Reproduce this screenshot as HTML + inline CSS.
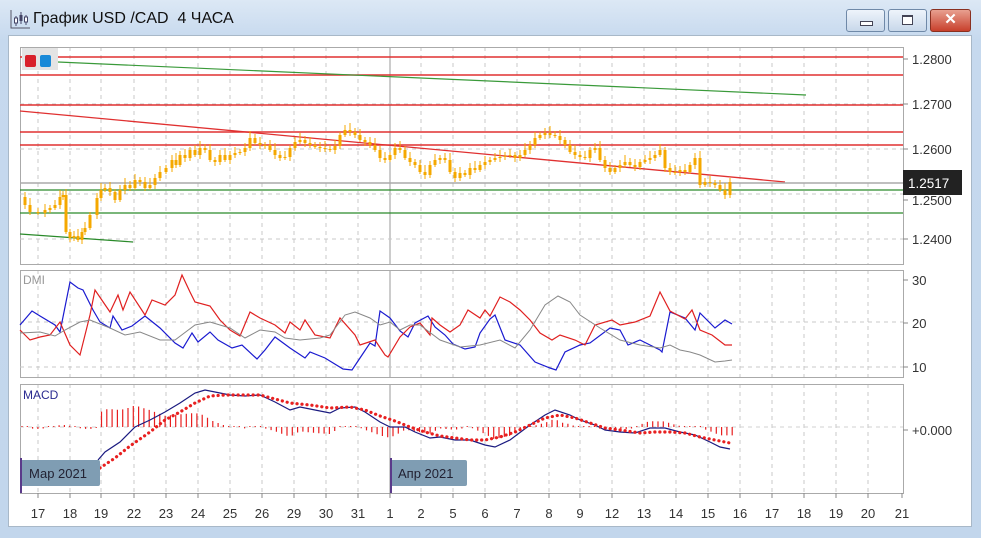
<!DOCTYPE html>
<html><head><meta charset="utf-8"><style>
html,body{margin:0;padding:0;width:981px;height:538px;overflow:hidden;background:#c9dbef;font-family:"Liberation Sans","Noto Sans CJK JP",sans-serif}
#frame{position:absolute;left:0;top:0;width:981px;height:538px;background:linear-gradient(#dce8f5,#c6d9ee 40px,#c2d6ec)}
#title{position:absolute;left:33px;top:10px;font-size:16px;color:#111}
.btn{position:absolute;top:9px;height:21px;border:1px solid #6f89a8;border-radius:3px;background:linear-gradient(#eef4fb,#c8d8ea)}
#inner{position:absolute;left:8px;top:35px;width:964px;height:492px;background:#fff;border:1px solid #a8b8c8;box-sizing:border-box}
svg{position:absolute;left:0;top:0}
</style></head><body>
<div id="frame"></div>
<svg width="30" height="30" style="left:8px;top:6px"><path d="M3 4V22H22" stroke="#556" fill="none"/><path d="M8 10V20M13 6V18M18 9V19" stroke="#446" stroke-width="1"/><rect x="6.5" y="12" width="3" height="5" fill="#fff" stroke="#446"/><rect x="11.5" y="9" width="3" height="6" fill="#446"/><rect x="16.5" y="11" width="3" height="5" fill="#fff" stroke="#446"/></svg>
<div id="title">График USD /CAD&nbsp; 4 ЧАСА</div>
<div class="btn" style="left:846px;width:37px"><div style="position:absolute;left:13px;top:11px;width:11px;height:3px;background:#fff;border:1px solid #445"></div></div>
<div class="btn" style="left:888px;width:37px"><div style="position:absolute;left:13px;top:5px;width:9px;height:7px;border:1px solid #445;border-top-width:2px;background:#fff"></div></div>
<div class="btn" style="left:930px;width:39px;background:linear-gradient(#e8a090,#c8402c);border-color:#8a3020;color:#fff;font-weight:bold;font-size:15px;text-align:center;line-height:20px">✕</div>
<div id="inner"></div>
<svg id="c" width="981" height="538" font-family="Liberation Sans, sans-serif"></svg>
<script>
var S=document.getElementById('c'),h='';
function L(x1,y1,x2,y2,c,w,d){h+='<line x1="'+x1+'" y1="'+y1+'" x2="'+x2+'" y2="'+y2+'" stroke="'+c+'" stroke-width="'+(w||1)+'"'+(d?' stroke-dasharray="'+d+'"':'')+'/>';}
function P(a,c,w,extra){h+='<polyline fill="none" stroke="'+c+'" stroke-width="'+(w||1)+'" '+(extra||'')+' points="'+a.join(' ')+'"/>';}
function T(x,y,t,c,s,extra){h+='<text x="'+x+'" y="'+y+'" fill="'+(c||'#333')+'" font-size="'+(s||13)+'" '+(extra||'')+'>'+t+'</text>';}
var xs=[38,70,101,134,166,198,230,262,294,326,358,421,453,485,517,549,580,612,644,676,708,740,772,804,836,868];
var panes=[[47,264],[270,377],[384,493]];
panes.forEach(function(p){xs.forEach(function(x){L(x,p[0],x,p[1],'#c8c8c8',1,'4,4');});L(390,p[0],390,p[1],'#999',1);h+='<rect x="20.5" y="'+p[0]+'.5" width="883" height="'+(p[1]-p[0])+'" fill="none" stroke="#aaa"/>';});
[104,149,194,239].forEach(function(y){L(20,y,903,y,'#c8c8c8',1,'4,4');});
[322,367].forEach(function(y){L(20,y,903,y,'#c8c8c8',1,'4,4');});
L(20,427,903,427,'#d0d0d0',1,'4,4');
[57,75,105,132,145].forEach(function(y){L(20,y,903,y,'#e03030',1.5);});
L(20,111,785,182,'#e03030',1.3);
L(58,62,806,95,'#3a9a3a',1.2);
L(20,234,133,242,'#2a8a2a',1.2);
L(20,183,903,183,'#aaa',1.5);
L(20,190,903,190,'#2a8a2a',1.3);L(20,213,903,213,'#2a8a2a',1.3);
var pr=[20,197,25,205,30,212,38,213,45,210,50,208,55,205,60,197,63,195,66,232,70,238,74,236,78,240,82,232,85,228,90,215,97,198,101,190,105,188,110,192,115,200,120,190,125,185,130,188,135,180,140,182,145,188,150,185,155,178,160,172,166,168,172,160,176,165,180,155,185,158,190,150,195,155,200,148,205,150,210,160,215,162,220,155,225,160,230,155,235,153,240,152,245,148,250,138,255,143,260,145,265,145,270,150,275,155,280,158,285,157,290,148,295,142,300,140,305,143,310,145,315,147,320,148,325,149,330,150,335,146,340,135,345,130,350,132,355,135,360,140,365,142,370,145,375,150,380,158,385,160,390,155,395,148,400,150,405,158,410,162,415,165,420,172,425,175,430,165,435,160,440,158,445,160,450,172,455,178,460,173,465,175,470,168,475,170,480,165,485,162,490,160,495,158,500,157,505,156,510,155,515,158,520,155,525,150,530,145,535,138,540,135,545,133,550,135,555,136,560,140,565,145,570,152,575,155,580,157,585,158,590,150,595,148,600,160,605,168,610,172,615,168,620,165,625,162,630,165,635,167,640,162,645,160,650,158,655,155,660,150,665,168,670,172,675,172,680,170,685,172,690,165,695,158,700,185,705,182,710,183,715,185,720,190,725,195,730,182];
var cp='',wp='';
for(var i=2;i<pr.length;i+=2){var x=pr[i],a=pr[i-1],b=pr[i+1],mn=Math.min(a,b),mx=Math.max(a,b);if(mx-mn<1)mx=mn+1;wp+='M'+x+' '+(mn-3-(i%5))+'V'+(mx+2+(i%3));cp+='M'+x+' '+mn+'V'+mx;}
h+='<path d="'+wp+'" stroke="#f5a800" stroke-width="1"/><path d="'+cp+'" stroke="#f5a800" stroke-width="3"/>';
P([20,325,32,311,40,316,55,325,60,332,70,282,78,288,83,290,93,310,100,322,110,328,113,316,122,330,132,326,145,316,150,320,160,328,175,343,183,348,192,333,198,342,210,332,218,340,232,348,242,345,257,359,265,350,275,337,290,348,305,358,310,352,325,358,343,369,352,370,360,358,370,343,375,346,380,311,390,318,400,331,408,337,415,323,428,316,435,327,445,335,453,344,465,349,475,347,480,333,490,319,495,315,505,340,520,345,535,362,550,368,556,370,565,352,580,345,590,343,610,328,620,330,628,345,640,340,660,350,662,352,670,312,685,318,695,330,700,313,715,328,725,320,732,324],'#1a1ad0',1.2);
P([20,330,30,340,40,337,50,335,60,322,70,345,80,355,90,315,95,290,110,312,118,295,123,310,130,292,145,315,152,300,165,305,175,295,182,275,190,292,195,302,210,306,220,320,230,330,240,336,250,312,260,318,275,325,285,333,290,322,300,330,305,320,315,335,330,338,340,318,355,335,360,345,375,340,385,355,388,357,400,337,410,327,420,323,430,335,432,318,440,325,450,332,460,325,468,310,480,318,485,310,490,316,500,297,510,302,520,310,530,320,540,333,552,340,560,335,575,340,585,345,595,325,612,320,620,325,635,322,650,316,660,292,670,311,685,319,692,310,700,330,712,335,725,345,732,345],'#e02020',1.2);
P([20,333,40,332,55,336,65,330,80,322,90,320,110,328,125,335,140,332,160,340,175,340,195,325,210,322,230,328,245,338,260,330,275,332,285,338,300,340,320,338,330,335,345,315,355,312,370,318,380,325,390,322,400,330,410,325,420,325,440,340,460,347,480,345,500,340,515,348,530,330,545,305,558,296,570,302,580,315,600,328,620,340,640,345,660,348,670,345,680,350,690,352,700,355,715,362,725,361,732,360],'#888',1);
T(23,284,'DMI','#999',12);
var bl=[98,460,105,452,120,442,135,427,150,420,165,412,180,403,195,393,205,390,215,392,230,395,245,396,260,395,275,402,290,410,300,407,315,410,330,413,340,408,355,407,365,412,380,422,390,427,405,427,415,432,430,438,440,437,455,440,470,440,485,445,495,447,510,440,530,425,545,415,555,410,570,415,580,420,595,425,605,430,620,432,635,433,650,428,665,428,680,432,695,435,710,442,720,447,730,449];
var sg=[100,468,115,458,130,446,150,432,165,420,180,412,195,403,210,396,225,395,245,395,260,395,275,399,290,403,310,405,330,408,350,407,365,410,380,416,395,421,410,427,425,432,440,436,455,438,470,440,485,440,500,437,515,432,530,425,545,418,560,415,575,418,590,423,605,428,620,430,640,433,655,432,670,432,685,433,700,437,715,440,730,443];
function iy(a,x){for(var i=2;i<a.length;i+=2){if(a[i]>=x){var t=(x-a[i-2])/(a[i]-a[i-2]);return a[i-1]+t*(a[i+1]-a[i-1]);}}return a[a.length-1];}
var hp='';
for(var x=22;x<=735;x+=5.3){var v;if(x<100){v=(Math.sin(x/8)*2);}else{v=(iy(sg,x)-iy(bl,x))*1.4;}var y2=427-v;hp+='M'+x.toFixed(1)+' 427V'+(Math.abs(v)<1?426:y2).toFixed(1);}
h+='<path d="'+hp+'" stroke="#e82020" stroke-width="1.2"/>';
P(bl,'#1a1a80',1.2);
P(sg,'#e82020',3.2,'stroke-dasharray="0.1,4.9" stroke-linecap="round"');
T(23,399,'MACD','#2a2a90',12);
h+='<rect x="20" y="460" width="80" height="26" rx="2" fill="#7f9db3"/><rect x="390" y="460" width="77" height="26" rx="2" fill="#7f9db3"/>';
L(21,458,21,493,'#5a3a8a',2);L(391,458,391,493,'#5a3a8a',2);
T(29,478,'Мар 2021','#223',13);T(398,478,'Апр 2021','#223',13);
[[59,'1.2800'],[104,'1.2700'],[149,'1.2600'],[239,'1.2400'],[200,'1.2500']].forEach(function(a){L(903,a[0],908,a[0],'#888');T(912,a[0]+5,a[1],'#333',13);});
h+='<rect x="903" y="170" width="59" height="25" fill="#222"/>';T(908,188,'1.2517','#fff',13.5);
[[280,'30'],[323,'20'],[367,'10']].forEach(function(a){L(903,a[0],908,a[0],'#888');T(912,a[0]+5,a[1],'#333',13);});
L(903,430,908,430,'#888');T(912,435,'+0.000','#333',13);
var dl=['17','18','19','22','23','24','25','26','29','30','31','1','2','5','6','7','8','9','12','13','14','15','16','17','18','19','20','21'];
var dx=[38,70,101,134,166,198,230,262,294,326,358,390,421,453,485,517,549,580,612,644,676,708,740,772,804,836,868,902];
dx.forEach(function(x,i){L(x,493,x,498,'#888');T(x,518,dl[i],'#333',13,'text-anchor="middle"');});
h+='<rect x="22" y="48" width="36" height="22" fill="#e4e4e4"/><rect x="25" y="55" width="11" height="12" rx="2" fill="#d8202a"/><rect x="40" y="55" width="11" height="12" rx="2" fill="#1a8ad8"/>';
S.innerHTML=h;
</script>
</body></html>
